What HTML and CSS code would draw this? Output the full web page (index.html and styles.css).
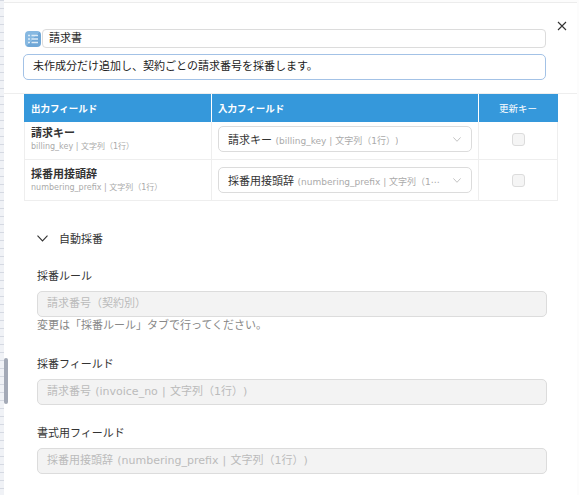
FILE: index.html
```html
<!DOCTYPE html>
<html lang="ja">
<head>
    <meta charset="UTF-8">
    <title>請求書</title>
    <link rel="stylesheet" href="styles.css">
</head>
<body>
    <div class="page-strip"></div>
    <div class="scroll-thumb"></div>
    <div class="dialog">
        <div class="dialog-head">
            <button class="close-btn" aria-label="閉じる">
                <svg width="10" height="10" viewBox="0 0 10 10"><path d="M1 1L9 9M9 1L1 9" stroke="#333" stroke-width="1.1" fill="none"/></svg>
            </button>
            <div class="title-row">
                <span class="app-icon">
                    <svg width="12" height="10" viewBox="0 0 12 10"><path d="M1 1.5h2M4.5 1.5H11M1 5h2M4.5 5H11M1 8.5h2M4.5 8.5H11" stroke="#dcebf7" stroke-width="1.4" fill="none"/></svg>
                </span>
                <div class="title-input">請求書</div>
            </div>
            <div class="summary-input">未作成分だけ追加し、契約ごとの請求番号を採番します。</div>
        </div>

        <div class="dialog-body">
            <table class="map-table">
                <thead>
                    <tr>
                        <th class="col-out">出力フィールド</th>
                        <th class="col-in">入力フィールド</th>
                        <th class="col-key">更新キー</th>
                    </tr>
                </thead>
                <tbody>
                    <tr class="row-first">
                        <td>
                            <div class="field-name">請求キー</div>
                            <div class="field-sub">billing_key | 文字列（1行）</div>
                        </td>
                        <td>
                            <div class="select">
                                <span class="select-text">請求キー <small>(billing_key | 文字列（1行）)</small></span>
                                <svg class="select-arrow" width="8" height="5" viewBox="0 0 8 5"><path d="M.4.4L4 4.300 7.600.4" stroke="#c4c4c4" fill="none"/></svg>
                            </div>
                        </td>
                        <td class="key-cell"><span class="checkbox"></span></td>
                    </tr>
                    <tr class="row-second">
                        <td>
                            <div class="field-name">採番用接頭辞</div>
                            <div class="field-sub">numbering_prefix | 文字列（1行）</div>
                        </td>
                        <td>
                            <div class="select">
                                <span class="select-text">採番用接頭辞 <small>(numbering_prefix | 文字列（1⋯</small></span>
                                <svg class="select-arrow" width="8" height="5" viewBox="0 0 8 5"><path d="M.4.4L4 4.300 7.600.4" stroke="#c4c4c4" fill="none"/></svg>
                            </div>
                        </td>
                        <td class="key-cell"><span class="checkbox"></span></td>
                    </tr>
                </tbody>
            </table>

            <div class="section-head">
                <svg width="11" height="7" viewBox="0 0 11 7"><path d="M.5.7L5.5 6 10.500.7" stroke="#333" stroke-width="1.1" fill="none"/></svg>
                <span>自動採番</span>
            </div>

            <div class="form-block">
                <div class="form-group">
                    <label>採番ルール</label>
                    <div class="disabled-input">請求番号（契約別）</div>
                    <p class="hint">変更は「採番ルール」タブで行ってください。</p>
                </div>
                <div class="form-group">
                    <label>採番フィールド</label>
                    <div class="disabled-input">請求番号 (invoice_no | 文字列（1行）)</div>
                </div>
                <div class="form-group">
                    <label>書式用フィールド</label>
                    <div class="disabled-input">採番用接頭辞 (numbering_prefix | 文字列（1行）)</div>
                </div>
            </div>
        </div>
    </div>
</body>
</html>
```

FILE: styles.css
```css
html, body {
    margin: 0;
    padding: 0;
    height: 495px;
    overflow: hidden;
}
body {
    font-family: "DejaVu Sans", "Noto Sans CJK JP", sans-serif;
    font-size: 11px;
    color: #333;
    background-color: #fcfcfc;
    position: relative;
    text-spacing-trim: space-all;
}
.page-strip {
    position: absolute;
    left: 0;
    top: 0;
    bottom: 0;
    width: 4px;
    background-image: repeating-linear-gradient(180deg, #d5d9e2 0, #d5d9e2 1px, #f0f2f6 1px, #f0f2f6 8px);
}
.scroll-thumb {
    position: absolute;
    left: 4px;
    top: 358px;
    width: 4px;
    height: 46px;
    border-radius: 2px;
    background-color: #a3a9b6;
    z-index: 2;
}
.dialog {
    margin: 2px 2px 0 4px;
    height: 493px;
    background-color: #fff;
    border-top: 1px solid #ececec;
    position: relative;
    box-sizing: border-box;
}
.dialog-head {
    height: 91px;
    padding: 26px 31px 0 19px;
    box-sizing: border-box;
    border-bottom: 1px solid #eee;
}
.close-btn {
    position: absolute;
    right: 5px;
    top: 16px;
    width: 20px;
    height: 14px;
    padding: 0;
    border: none;
    background: none;
    display: flex;
    align-items: center;
    justify-content: center;
}
.title-row {
    display: flex;
    align-items: center;
    gap: 1px;
    margin-left: 2px;
}
.app-icon {
    width: 16px;
    height: 16px;
    border-radius: 4px;
    background: linear-gradient(135deg, #86b8e1 50%, #6fa7d7 50%);
    display: flex;
    align-items: center;
    justify-content: center;
}
.title-input {
    flex: 1;
    height: 19px;
    line-height: 17px;
    padding-left: 6px;
    border: 1px solid #dcdcdc;
    border-radius: 4px;
    box-sizing: border-box;
    color: #222;
}
.summary-input {
    margin-top: 6px;
    height: 26px;
    line-height: 23px;
    padding-left: 9px;
    border: 1px solid #a3c2e6;
    border-radius: 5px;
    box-sizing: border-box;
    color: #222;
}
.dialog-body {
    padding: 0 0 0 20px;
}
.map-table {
    width: 534px;
    border-collapse: separate;
    border-spacing: 0;
    table-layout: fixed;
}
.map-table th {
    height: 28px;
    padding: 0 7px 0 6px;
    box-sizing: border-box;
    background-color: #3598db;
    color: #fff;
    font-size: 9.500px;
    font-weight: 700;
    text-align: left;
    border-left: 1px solid #fff;
}
.map-table th:first-child {
    border-left: none;
    padding-left: 7px;
}
.col-out {
    width: 187px;
}
.col-key {
    width: 80px;
}
.map-table th.col-key {
    text-align: center;
    font-weight: 400;
}
.map-table td {
    padding: 0 6px;
    box-sizing: border-box;
    border-left: 1px solid #eee;
    border-bottom: 1px solid #eee;
}
.map-table td:last-child {
    border-right: 1px solid #eee;
}
.row-first td {
    height: 38px;
    padding-bottom: 3px;
}
.row-second td {
    height: 41px;
}
.field-name {
    font-weight: 700;
    line-height: 14px;
    color: #333;
}
.field-sub {
    font-size: 8px;
    line-height: 11px;
    color: #aaa;
}
.select {
    height: 26px;
    padding: 0 9px;
    border: 1px solid #dcdcdc;
    border-radius: 5px;
    box-sizing: border-box;
    display: flex;
    align-items: center;
    justify-content: space-between;
    white-space: nowrap;
}
.select-text {
    min-width: 0;
    overflow: hidden;
}
.select-text small {
    font-size: 9px;
    color: #aaa;
}
.select-arrow {
    flex: none;
    margin: 0 1px 0 8px;
}
.key-cell {
    text-align: center;
}
.checkbox {
    display: inline-block;
    width: 13px;
    height: 13px;
    box-sizing: border-box;
    vertical-align: middle;
    border: 1px solid #dcdcdc;
    border-radius: 3px;
    background-color: #f5f5f5;
}
.section-head {
    display: flex;
    align-items: center;
    gap: 11px;
    margin: 28px 0 0 13px;
    height: 18px;
}
.form-block {
    margin: 0 30px 0 13px;
    padding-top: 1px;
}
.form-group {
    margin-top: 21px;
}
.form-group label {
    display: block;
    line-height: 16px;
    color: #333;
}
.disabled-input {
    margin-top: 6px;
    height: 26px;
    line-height: 23px;
    padding-left: 9px;
    border: 1px solid #dcdcdc;
    border-radius: 5px;
    box-sizing: border-box;
    background-color: #f3f3f3;
    color: #bbb;
    word-spacing: 0.7px;
}
.hint {
    margin: 0;
    line-height: 18px;
    padding-bottom: 1px;
    color: #888;
}
```
